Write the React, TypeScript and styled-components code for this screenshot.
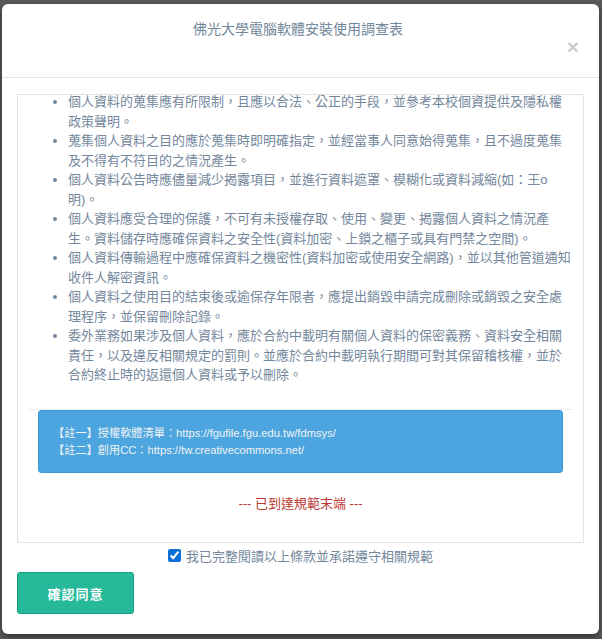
import styled, { createGlobalStyle } from "styled-components";

const GlobalStyle = createGlobalStyle`
  html, body {
    margin: 0;
    padding: 0;
    background: #5b5b5b;
  }
  body {
    font-family: "Liberation Sans", "Noto Sans CJK TC", sans-serif;
  }
`;

const Backdrop = styled.div`
  min-height: 100vh;
  box-sizing: border-box;
  padding: 4px 3px 0 2px;
`;
const Modal = styled.div`
  width: 597px;
  height: 630px;
  box-sizing: border-box;
  background: #fff;
  border-radius: 6px;
  box-shadow: 0 3px 9px rgba(0, 0, 0, 0.5);
  display: flex;
  flex-direction: column;
  color: #73879c;
`;
const Header = styled.div`
  height: 74px;
  box-sizing: border-box;
  padding: 15px 20px 0 15px;
  border-bottom: 1px solid #e5e5e5;
`;
const Title = styled.h4`
  margin: 0;
  text-align: center;
  font-size: 14px;
  font-weight: normal;
  line-height: 20px;
`;
const CloseRow = styled.div`
  display: flex;
  justify-content: flex-end;
`;
const CloseBtn = styled.button`
  background: none;
  border: 0;
  padding: 0;
  font: bold 21px/16px "Liberation Sans", sans-serif;
  color: #000;
  opacity: 0.2;
  cursor: pointer;
`;
const Body = styled.div`
  flex: 1;
  padding: 16px 15px 0;
  display: flex;
  flex-direction: column;
`;
const TermsBox = styled.div`
  height: 449px;
  box-sizing: border-box;
  border: 1px solid #e3e3e3;
  padding: 0 10px;
  overflow: hidden;
`;
const TermsList = styled.ul`
  margin: -3px 0 0;
  padding-left: 40px;
  font-size: 13px;
  line-height: 19.5px;
`;
const Divider = styled.hr`
  border: 0;
  border-top: 1px solid #eee;
  margin: 24px 0 0;
`;
const Notice = styled.div`
  margin: 0 10px;
  padding: 14px 14px 13px;
  background: rgba(52, 152, 219, 0.88);
  border: 1px solid rgba(52, 152, 219, 0.88);
  border-radius: 4px;
  color: #f0f3f5;
  font-size: 11.2px;
  line-height: 17px;
`;
const EndNote = styled.div`
  margin-top: 21px;
  text-align: center;
  color: #b83a32;
  font-size: 13px;
  line-height: 19.5px;
`;
const AgreeRow = styled.label`
  margin-top: 2px;
  height: 20px;
  display: flex;
  justify-content: center;
  align-items: center;
  gap: 5px;
  font-size: 13px;
`;
const Check = styled.input`
  width: 13px;
  height: 13px;
  margin: 0;
  accent-color: #0b6fd8;
`;
const ConfirmBtn = styled.button`
  margin-top: 7px;
  width: 117px;
  height: 42px;
  background: #26b99a;
  border: 1px solid #169f85;
  border-radius: 3px;
  color: #fff;
  font-family: "Liberation Sans", "Noto Sans CJK TC", sans-serif;
  font-size: 13px;
  font-weight: bold;
  letter-spacing: 1px;
  cursor: pointer;
`;

const terms = [
  "個人資料的蒐集應有所限制，且應以合法、公正的手段，並參考本校個資提供及隱私權政策聲明。",
  "蒐集個人資料之目的應於蒐集時即明確指定，並經當事人同意始得蒐集，且不過度蒐集及不得有不符目的之情況產生。",
  "個人資料公告時應儘量減少揭露項目，並進行資料遮罩、模糊化或資料減縮(如：王o明)。",
  "個人資料應受合理的保護，不可有未授權存取、使用、變更、揭露個人資料之情況產生。資料儲存時應確保資料之安全性(資料加密、上鎖之櫃子或具有門禁之空間)。",
  "個人資料傳輸過程中應確保資料之機密性(資料加密或使用安全網路)，並以其他管道通知收件人解密資訊。",
  "個人資料之使用目的結束後或逾保存年限者，應提出銷毀申請完成刪除或銷毀之安全處理程序，並保留刪除記錄。",
  "委外業務如果涉及個人資料，應於合約中載明有關個人資料的保密義務、資料安全相關責任，以及違反相關規定的罰則。並應於合約中載明執行期間可對其保留稽核權，並於合約終止時的返還個人資料或予以刪除。",
];

function App() {
  return (
    <>
      <GlobalStyle />
      <Backdrop>
        <Modal>
          <Header>
            <Title>佛光大學電腦軟體安裝使用調查表</Title>
            <CloseRow>
              <CloseBtn>×</CloseBtn>
            </CloseRow>
          </Header>
          <Body>
            <TermsBox>
              <TermsList>
                {terms.map((t) => (
                  <li key={t}>{t}</li>
                ))}
              </TermsList>
              <Divider />
              <Notice>
                <div>【註一】授權軟體清單：https://fgufile.fgu.edu.tw/fdmsys/</div>
                <div>【註二】創用CC：https://tw.creativecommons.net/</div>
              </Notice>
              <EndNote>--- 已到達規範末端 ---</EndNote>
            </TermsBox>
            <AgreeRow>
              <Check type="checkbox" defaultChecked />
              我已完整閱讀以上條款並承諾遵守相關規範
            </AgreeRow>
            <div>
              <ConfirmBtn>確認同意</ConfirmBtn>
            </div>
          </Body>
        </Modal>
      </Backdrop>
    </>
  );
}

export default App;
